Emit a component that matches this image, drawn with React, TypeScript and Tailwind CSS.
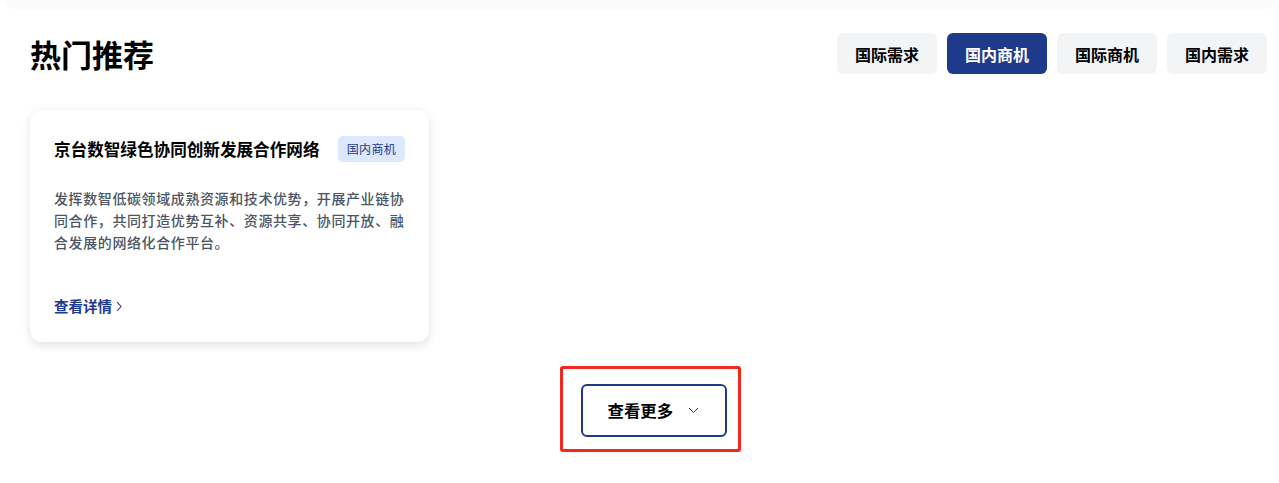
import React from "react";

const font = { fontFamily: '"Noto Sans CJK SC", "Noto Sans", sans-serif' };

const tabs = ["国际需求", "国内商机", "国际商机", "国内需求"];

function RecommendCard() {
  return (
    <div className="w-[399px] rounded-[12px] bg-white px-6 pt-[26px] pb-[26px] shadow-[0_3px_10px_rgba(0,0,0,0.12)]">
      <div className="flex items-center justify-between">
        <p className="text-[16.6px] font-bold leading-[26px] text-black">京台数智绿色协同创新发展合作网络</p>
        <span className="flex h-[26px] items-center rounded-[5px] bg-[#dbe8fd] px-[9px] text-[12px] tracking-[0.3px] text-[#1e3a8a]">
          国内商机
        </span>
      </div>
      <p className="mt-[25px] text-[14px] font-medium leading-[22px] tracking-[0.6px] text-[#4b5563]">
        发挥数智低碳领域成熟资源和技术优势，开展产业链协同合作，共同打造优势互补、资源共享、协同开放、融合发展的网络化合作平台。
      </p>
      <a className="mt-[43px] flex items-center gap-[4px] text-[14.5px] font-bold leading-[20px] text-[#1e3a8a]">
        查看详情
        <svg width="6" height="11" viewBox="0 0 6 11" fill="none">
          <path d="M1 1l4 4.5L1 10" stroke="#1e3a8a" strokeWidth="1.1" />
        </svg>
      </a>
    </div>
  );
}

export default function App() {
  return (
    <div className="min-h-[483px] w-full bg-white" style={font}>
      <div className="mx-[4px] h-[9px] rounded-b-[14px] bg-[#fbfbfb]" />
      <div className="pl-[30px] pr-[12px]">
        <div className="mt-[24px] flex items-center justify-between">
          <h1 className="text-[31px] font-bold leading-[41px] text-black">热门推荐</h1>
          <div className="flex gap-[10px]">
            {tabs.map((t, i) => (
              <button
                key={t}
                className={
                  i === 1
                    ? "h-[41px] w-[100px] rounded-[6px] bg-[#1e3a8a] text-[16px] font-bold text-white"
                    : "h-[41px] w-[100px] rounded-[6px] bg-[#f3f4f6] text-[16px] font-bold text-black"
                }
              >
                {t}
              </button>
            ))}
          </div>
        </div>

        <div className="mt-[36px] grid grid-cols-3 gap-6">
          <RecommendCard />
        </div>

        <div className="mt-[24px] flex justify-center pl-[3px]">
          <div className="rounded-[3px] border-[3px] border-[#f5261b] pt-[15px] pr-[11px] pb-[12px] pl-[18px]">
            <button className="flex h-[53px] w-[146px] items-center rounded-[6px] border-2 border-[#1e3a8a] pl-[25px] text-[16.4px] font-bold text-black">
              查看更多
              <svg className="ml-[15px]" width="11" height="7" viewBox="0 0 11 7" fill="none">
                <path d="M1 1l4.5 4.5L10 1" stroke="#1e3a8a" strokeWidth="1" />
              </svg>
            </button>
          </div>
        </div>
      </div>
    </div>
  );
}
